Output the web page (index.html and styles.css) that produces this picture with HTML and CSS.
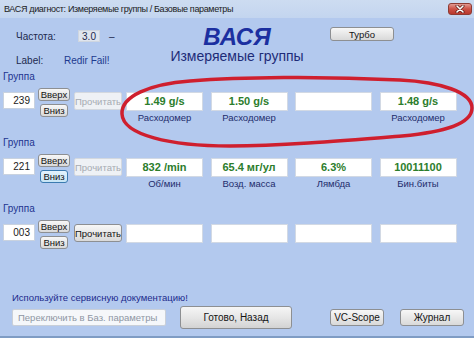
FILE: index.html
```html
<!DOCTYPE html>
<html lang="ru">
<head>
<meta charset="utf-8">
<title>ВАСЯ диагност</title>
<link rel="stylesheet" href="styles.css">
</head>
<body>
<div class="window">
  <div class="titlebar">
    <span class="title">ВАСЯ диагност: Измеряемые группы / Базовые параметры</span>
    <span class="close"><svg width="10" height="8" viewBox="0 0 10 8"><path d="M2 1 L8 7 M8 1 L2 7" stroke="#5a1a14" stroke-width="3" stroke-linecap="round"/><path d="M2 1 L8 7 M8 1 L2 7" stroke="#ffffff" stroke-width="1.6" stroke-linecap="round"/></svg></span>
  </div>
  <div class="client">
    <div class="header">
      <div class="info">
        <div class="info-row"><span class="lbl lbl-freq">Частота:</span><span class="freq">3.0</span><span class="dash">–</span></div>
        <div class="info-row"><span class="lbl lbl-label">Label:</span><span class="redir">Redir Fail!</span></div>
      </div>
      <div class="brand">
        <div class="brand-name">ВАСЯ</div>
        <div class="brand-sub">Измеряемые группы</div>
      </div>
      <div class="tools"><button class="btn turbo">Турбо</button></div>
    </div>

    <section class="group">
      <div class="group-title">Группа</div>
      <div class="group-row">
        <div class="num">239</div>
        <div class="updown"><button class="btn up">Вверх</button><button class="btn down">Вниз</button></div>
        <button class="btn read disabled">Прочитать</button>
        <div class="cells">
          <div class="cell"><div class="value">1.49 g/s</div><div class="caption">Расходомер</div></div>
          <div class="cell"><div class="value">1.50 g/s</div><div class="caption">Расходомер</div></div>
          <div class="cell"><div class="value"></div><div class="caption"></div></div>
          <div class="cell"><div class="value">1.48 g/s</div><div class="caption">Расходомер</div></div>
        </div>
      </div>
    </section>

    <section class="group">
      <div class="group-title">Группа</div>
      <div class="group-row">
        <div class="num">221</div>
        <div class="updown"><button class="btn up">Вверх</button><button class="btn down focused">Вниз</button></div>
        <button class="btn read disabled">Прочитать</button>
        <div class="cells">
          <div class="cell"><div class="value">832 /min</div><div class="caption">Об/мин</div></div>
          <div class="cell"><div class="value">65.4 мг/ул</div><div class="caption">Возд. масса</div></div>
          <div class="cell"><div class="value">6.3%</div><div class="caption">Лямбда</div></div>
          <div class="cell"><div class="value">10011100</div><div class="caption">Бин.биты</div></div>
        </div>
      </div>
    </section>

    <section class="group">
      <div class="group-title">Группа</div>
      <div class="group-row">
        <div class="num">003</div>
        <div class="updown"><button class="btn up">Вверх</button><button class="btn down">Вниз</button></div>
        <button class="btn read">Прочитать</button>
        <div class="cells">
          <div class="cell"><div class="value"></div></div>
          <div class="cell"><div class="value"></div></div>
          <div class="cell"><div class="value"></div></div>
          <div class="cell"><div class="value"></div></div>
        </div>
      </div>
    </section>

    <footer class="footer">
      <div class="hint">Используйте сервисную документацию!</div>
      <div class="actions">
        <div class="switch">Переключить в Баз. параметры</div>
        <button class="btn done">Готово, Назад</button>
        <button class="btn scope">VC-Scope</button>
        <button class="btn journal">Журнал</button>
      </div>
    </footer>
  </div>
  <svg class="marker" width="474" height="338" viewBox="0 0 474 338">
    <path d="M122,114 C121,96 150,84 190,81 C240,77 320,76 400,80 C440,82 472,92 472,108 C472,124 444,132 402,136 C340,141 280,146 230,146 C170,146 123,135 122,114 Z" fill="none" stroke="#cf1f2e" stroke-width="3.5" stroke-linejoin="round"/>
  </svg>
</div>
</body>
</html>
```

FILE: styles.css
```css
* { box-sizing: border-box; }

html, body {
  margin: 0;
  padding: 0;
}

body {
  width: 474px;
  height: 338px;
  overflow: hidden;
  font-family: "Liberation Sans", Arial, sans-serif;
  background: #b3c9ee;
}

.window {
  position: relative;
  width: 474px;
  height: 338px;
  display: flex;
  flex-direction: column;
  background: #b3c9ee;
  border-bottom: 2px solid #7f9cc4;
}

.titlebar {
  height: 18px;
  flex: none;
  display: flex;
  align-items: center;
  justify-content: space-between;
  padding: 0 2px 0 4px;
  background: linear-gradient(#cddcf1, #c3d5ef);
}

.title {
  font-size: 9px;
  letter-spacing: -0.35px;
  color: #1b1b1b;
  white-space: nowrap;
}

.close {
  width: 24px;
  height: 12px;
  display: flex;
  align-items: center;
  justify-content: center;
  border: 1px solid #8d3b33;
  border-radius: 3px;
  background: linear-gradient(#e29a92, #cc5045 50%, #b9392e);
}

.client {
  flex: 1;
  display: flex;
  flex-direction: column;
}

/* header */
.header {
  height: 52px;
  flex: none;
  display: grid;
  grid-template-columns: 170px 134px 1fr;
}

.info {
  padding: 12px 0 0 16px;
  display: flex;
  flex-direction: column;
  gap: 12px;
}

.info-row {
  height: 12px;
  display: flex;
  align-items: center;
  font-size: 10px;
}

.lbl {
  color: #1d2a4e;
}

.lbl-freq { width: 62px; }
.lbl-label { width: 48px; }

.freq {
  width: 22px;
  height: 12px;
  line-height: 12px;
  text-align: center;
  background: #dfe5ee;
  border: 1px solid #cfd6e0;
  color: #1d2a4e;
}

.dash {
  margin-left: 9px;
  color: #1d2a4e;
}

.redir {
  color: #1d3a8f;
}

.brand {
  text-align: center;
  padding-top: 7px;
  white-space: nowrap;
}

.brand-name {
  font-size: 24px;
  line-height: 24px;
  font-weight: bold;
  font-style: italic;
  color: #1b2fa0;
}

.brand-sub {
  font-size: 14px;
  line-height: 15px;
  color: #1e2c78;
}

.tools {
  padding: 9px 0 0 26px;
}

/* buttons */
.btn {
  font-family: "Liberation Sans", Arial, sans-serif;
  font-size: 9.5px;
  color: #141414;
  padding: 0;
  border: 1px solid #8d8f92;
  border-radius: 3px;
  background: linear-gradient(#f7f7f7, #e8e8e8 50%, #d9d9d9);
  display: flex;
  align-items: center;
  justify-content: center;
  white-space: nowrap;
}

.turbo {
  width: 64px;
  height: 14px;
}

.btn.disabled {
  background: #eef1f5;
  border-color: #d3d8df;
  color: #a6abb2;
  border-radius: 2px;
}

.btn.focused {
  border-color: #3b7bb0;
  background: linear-gradient(#e3f3fc, #c6e4f5);
}

/* groups */
.group {
  height: 66px;
  flex: none;
}

.group-title {
  height: 14px;
  line-height: 14px;
  padding-left: 3px;
  font-size: 10px;
  color: #1e3490;
}

.group-row {
  display: flex;
  align-items: flex-start;
  padding-left: 3px;
}

.num {
  width: 32px;
  height: 17px;
  margin-top: 8px;
  padding-right: 4px;
  line-height: 16px;
  text-align: right;
  font-size: 10px;
  color: #1a1a1a;
  background: #ffffff;
  border: 1px solid #c9d2df;
}

.updown {
  margin: 4px 0 0 3px;
  width: 32px;
  display: flex;
  flex-direction: column;
  align-items: center;
  gap: 3px;
}

.up {
  width: 32px;
  height: 13px;
}

.down {
  width: 28px;
  height: 13px;
}

.read {
  width: 48px;
  height: 18px;
  margin: 8px 0 0 4px;
}

.cells {
  margin: 8px 0 0 4px;
  display: grid;
  grid-template-columns: repeat(4, 77px);
  column-gap: 7.5px;
}

.value {
  height: 19px;
  line-height: 17px;
  text-align: center;
  font-size: 11px;
  font-weight: bold;
  color: #2c7d2c;
  background: #ffffff;
  border: 1px solid #d2d9e4;
}

.caption {
  height: 14px;
  line-height: 14px;
  text-align: center;
  font-size: 9.5px;
  color: #1e2c6c;
}

/* footer */
.footer {
  margin-top: auto;
  padding: 0 0 6px 12px;
}

.hint {
  height: 12px;
  line-height: 12px;
  font-size: 9.5px;
  color: #1c2a8c;
}

.actions {
  height: 26px;
  display: flex;
  align-items: center;
}

.switch {
  width: 154px;
  height: 17px;
  line-height: 15px;
  padding-left: 5px;
  font-size: 9.5px;
  color: #8e96a3;
  background: #f5f7fa;
  border: 1px solid #c9cfd8;
  border-radius: 2px;
  white-space: nowrap;
}

.done {
  width: 112px;
  height: 23px;
  margin-left: 14px;
  font-size: 10px;
  background: linear-gradient(#f6f6f6, #e6e6e6 50%, #d3d3d3);
}

.scope {
  width: 54px;
  height: 17px;
  margin-left: 38px;
  font-size: 10px;
}

.journal {
  width: 64px;
  height: 17px;
  margin-left: 16px;
  font-size: 10px;
}

.marker {
  position: absolute;
  left: 0;
  top: 0;
  pointer-events: none;
}
```
